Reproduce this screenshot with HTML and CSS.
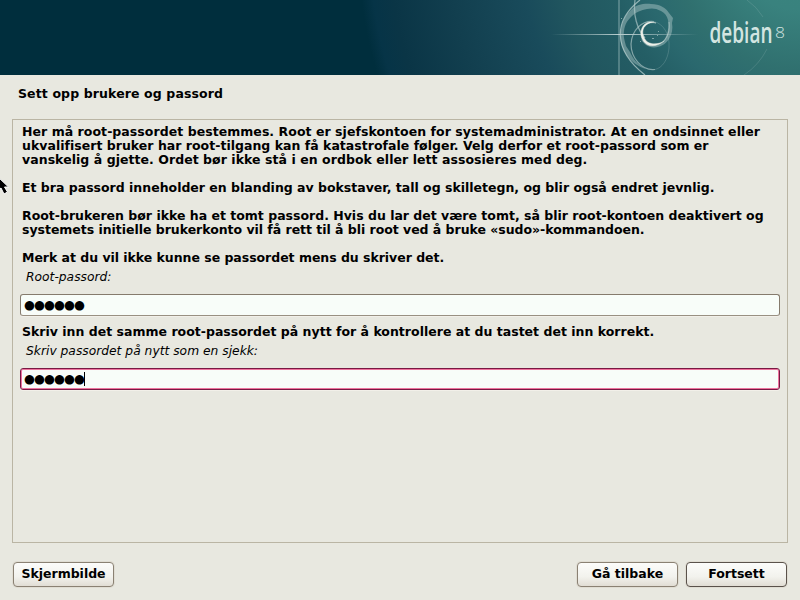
FILE: index.html
```html
<!DOCTYPE html>
<html lang="nb">
<head>
<meta charset="utf-8">
<title>Sett opp brukere og passord</title>
<link rel="stylesheet" href="styles.css">
</head>
<body>
<header class="banner">
  <svg class="art" width="800" height="75" viewBox="0 0 800 75">
    <defs>
      <linearGradient id="beam" gradientUnits="userSpaceOnUse" x1="551" x2="698" y1="0" y2="0">
        <stop offset="0" stop-color="#b9cfcf" stop-opacity="0"/>
        <stop offset=".48" stop-color="#c9dada" stop-opacity=".95"/>
        <stop offset="1" stop-color="#b9cfcf" stop-opacity="0"/>
      </linearGradient>
    </defs>
    <rect x="618" y="0" width="2" height="75" fill="#8eb0b2" opacity=".45"/>
    <rect x="551" y="34" width="147" height="1" fill="url(#beam)"/>
    <path d="M646 69C630 64 620 50 620.5 36C621 25 624 16 631 10C637 4 644 3.5 651 4C660 4 666 8 669 13L673 18L672 23C673 29 672 34 669 39C665 45 660 47 654 47.5C648 47 643 44 641 39L645 42C650 46 658 46 663 41C668 36 669 27 668 20C667 16 665 13 661 11C656 8 651 8 647 9C641 10 636 12 632 16C627 21 625 24 624 31C623 37 625 41 626 46L630 52C633 59 638 65 646 69Z" fill="#a5c1c1" opacity=".5"/>
    <g fill="none" stroke="#b5cdcd">
      <path d="M640 0C613 21 613 50 645 75" stroke-width="1.2" opacity=".75"/>
      <path d="M635 0C633 15 637 29 645 38" stroke-width="1.3" opacity=".65"/>
      <path d="M654 21.5C642 20 632 30 631 44C631 57 641 71 655 69.5" stroke-width="1.2" opacity=".65"/>
      <path d="M654 21.5C664 24 670 35 669 48C668 60 662 68 655 69.5" opacity=".22"/>
      <path d="M747 0Q757 7 763 17M767 49Q759 65 744 75" opacity=".18"/>
    </g>
    <path d="M656 23C650 21 645 22 642 28C639 35 642 41 647 44.5C652 47 659 45.5 664 41C660 44 652 45 647.5 42C643 38 641.5 32 644 27.500C647 23 651 22 656 23Z" fill="#edf0e9" stroke="#edf0e9" stroke-width=".4"/>
    <path d="M663 42C668 37 670 30 669 22" fill="none" stroke="#c5d7d4" stroke-width="1" opacity=".6"/>
    <path d="M652 38h2v1h-2zM658 31h1v1h-1zM657 35h1v1h-1zM640 41h1v1h-1zM621 18h1v1h-1z" fill="#a9c5c5" opacity=".7"/>
    <text class="wordmark" x="709.5" y="43" textLength="63" lengthAdjust="spacingAndGlyphs">debian</text>
    <text class="eight" x="775" y="38" textLength="10" lengthAdjust="spacingAndGlyphs">8</text>
  </svg>
</header>
<h1 class="title">Sett opp brukere og passord</h1>
<main class="panel">
  <div class="copy">
    <p class="loose">Her må root-passordet bestemmes. Root er sjefskontoen for systemadministrator. At en ondsinnet eller</p>
    <p class="wide">ukvalifisert bruker har root-tilgang kan få katastrofale følger. Velg derfor et root-passord som er</p>
    <p class="loose">vanskelig å gjette. Ordet bør ikke stå i en ordbok eller lett assosieres med deg.</p>
    <p class="gap">Et bra passord inneholder en blanding av bokstaver, tall og skilletegn, og blir også endret jevnlig.</p>
    <p class="gap">Root-brukeren bør ikke ha et tomt passord. Hvis du lar det være tomt, så blir root-kontoen deaktivert og</p>
    <p class="tight">systemets initielle brukerkonto vil få rett til å bli root ved å bruke «sudo»-kommandoen.</p>
    <p class="gap tight">Merk at du vil ikke kunne se passordet mens du skriver det.</p>
  </div>
  <label class="caption">Root-passord:</label>
  <div class="field">●●●●●●</div>
  <p class="again">Skriv inn det samme root-passordet på nytt for å kontrollere at du tastet det inn korrekt.</p>
  <label class="caption">Skriv passordet på nytt som en sjekk:</label>
  <div class="field focused">●●●●●●<span class="caret"></span></div>
</main>
<footer class="actions">
  <button class="button">Skjermbilde</button>
  <button class="button back">Gå tilbake</button>
  <button class="button primary">Fortsett</button>
</footer>
<svg class="cursor" width="9" height="18" viewBox="0 0 9 18"><path d="M-3 -1L8.5 10H4.5L7.5 15L4 17L1 11L-3 14Z" fill="#000" stroke="#fff"/></svg>
</body>
</html>
```

FILE: styles.css
```css
* { box-sizing: border-box; }
body {
  margin: 0;
  width: 800px;
  height: 600px;
  overflow: hidden;
  display: flex;
  flex-direction: column;
  position: relative;
  background: #e8e8e0;
  color: #000;
  font: bold 12.5px/14px "DejaVu Sans", sans-serif;
}
p, h1 { margin: 0; white-space: nowrap; }
.banner {
  height: 75px;
  flex: none;
  background: radial-gradient(circle at 800px -55px, #3a877f 0, #39827e 65px, #30706f 125px, #2a686e 160px, #245e65 190px, #21565f 240px, #194b5b 280px, #123f4f 350px, #0a3546 410px, #063447 430px, #002e3d 442px);
}
.art { display: block; }
.wordmark { font: 600 28px "Open Sans", sans-serif; fill: #d3e5e1; }
.eight { font: 300 15px "Open Sans", sans-serif; fill: #d3e5e1; }
.title { font-size: 12.5px; line-height: 14px; letter-spacing: .12px; margin: 12px 0 0 18px; }
.panel {
  margin: 18px 12px 0;
  height: 424px;
  flex: none;
  border: 1px solid #bab5a4;
  padding: 5px 7px 0;
}
.copy, .again { padding-left: 2px; }
.gap { margin-top: 14px; }
.loose { letter-spacing: .05px; }
.wide { letter-spacing: .07px; margin-right: -10px; }
.wide { letter-spacing: .02px; }
.tight { letter-spacing: -.03px; }
.caption {
  display: block;
  margin: 5px 0 0 6px;
  font-size: 12.25px;
  font-weight: normal;
  font-style: italic;
  letter-spacing: .02px;
  white-space: nowrap;
}
.field {
  height: 22px;
  margin-top: 10px;
  padding-left: 3px;
  display: flex;
  align-items: center;
  background: #f8fdf9;
  border: 1px solid #857b6d;
  border-bottom-color: #999082;
  border-radius: 3px;
  box-shadow: 0 1px 0 #f2f0e9;
  font-weight: normal;
  font-size: 12.5px;
  letter-spacing: -.9px;
}
.field.focused { border-color: #791943; box-shadow: inset 0 0 0 1px #ed739e, 0 1px 0 #f2f0e9; }
.caret { width: 1px; height: 14px; background: #000; }
.again { margin-top: 9px; letter-spacing: .01px; }
.actions { display: flex; gap: 8px; margin: 19px 13px 0; }
.button {
  width: 101px;
  height: 25px;
  padding: 0 0 1px;
  border: 1px solid #8a8173;
  border-radius: 4px;
  background: linear-gradient(#fcfcfa, #f2f2ed 60%, #e1ddd4);
  box-shadow: 0 0 0 1px #e0ddd3;
  color: #000;
  font: inherit;
}
.primary { border-color: #5a524b; }
.back { margin-left: auto; }
.cursor { position: absolute; left: 0; top: 177px; }
```
